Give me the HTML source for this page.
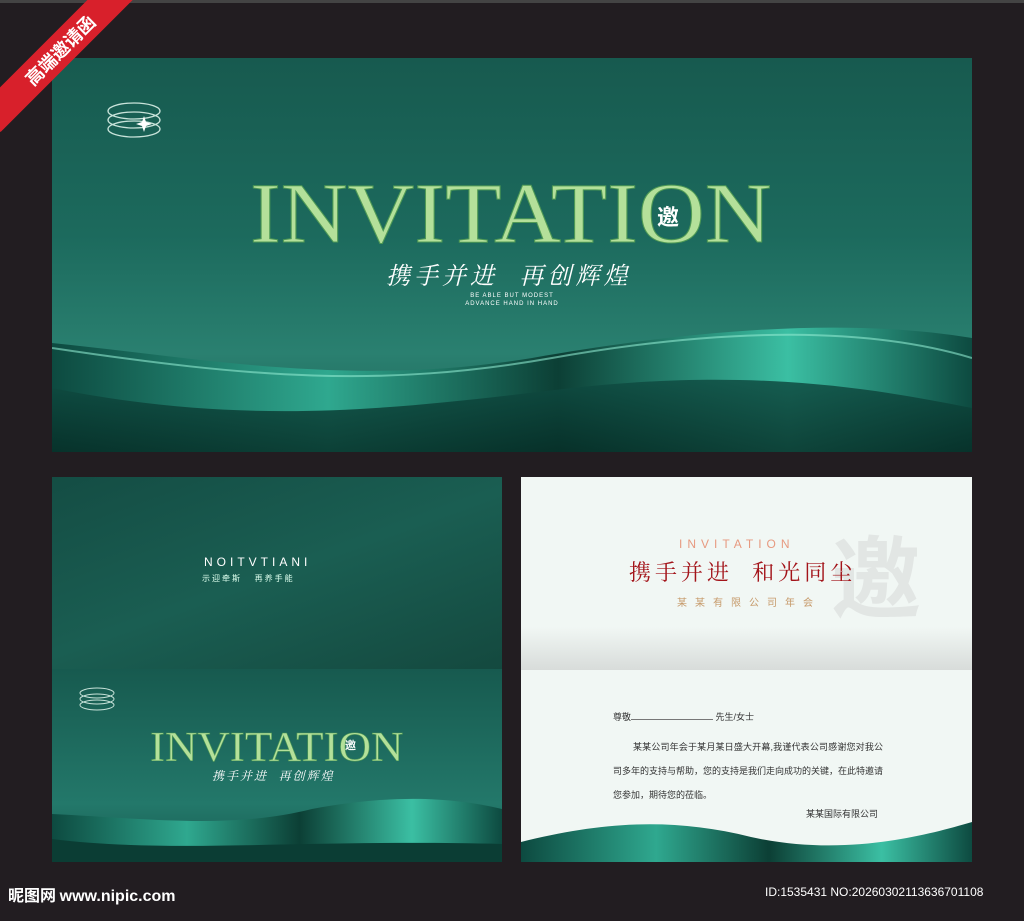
<!DOCTYPE html>
<html><head><meta charset="utf-8"><style>
*{margin:0;padding:0;box-sizing:border-box}
body{width:1024px;height:921px;background:#221d21;position:relative;overflow:hidden;font-family:"Liberation Sans","Noto Sans CJK SC",sans-serif}
.p{position:absolute;overflow:hidden}
.ab{position:absolute}
.inv{position:absolute;font-family:"Liberation Serif",serif;color:#b4e09a;white-space:nowrap;line-height:1;-webkit-text-stroke:1px #4f9a55;transform-origin:left top}
.cal{font-family:"Liberation Sans","Noto Serif CJK SC",sans-serif;color:#fff;white-space:nowrap;position:absolute}
</style></head><body>
<div class="ab" style="left:0;top:0;width:1024px;height:3px;background:#444"></div>
<!-- top panel -->
<div class="p" style="left:52px;top:58px;width:920px;height:394px;background:linear-gradient(180deg,#175a4f 0%,#1c6a5d 45%,#2a8070 75%,#1b5e52 100%)">
<svg class="ab" style="left:0;top:0" width="920" height="394">
<defs><linearGradient id="g1" x1="0" y1="0" x2="1" y2="0"><stop offset="0" stop-color="#0d4a40"/><stop offset=".3" stop-color="#2fa88f"/><stop offset=".55" stop-color="#0c3f35"/><stop offset=".8" stop-color="#3bbfa3"/><stop offset="1" stop-color="#0d4a40"/></linearGradient>
<linearGradient id="g2" x1="0" y1="0" x2="0" y2="1"><stop offset="0" stop-color="#0f4c42"/><stop offset="1" stop-color="#062e27"/></linearGradient></defs>
<path d="M0 285 C150 300 300 330 480 300 C650 270 800 260 920 280 L920 394 L0 394Z" fill="url(#g1)"/>
<path d="M0 330 C200 370 350 350 520 330 C700 310 820 330 920 350 L920 394 L0 394Z" fill="url(#g2)" opacity=".85"/>
<path d="M0 290 C200 320 330 330 500 300 C680 268 820 270 920 300" stroke="#8ee8cf" stroke-width="2" fill="none" opacity=".6"/>
<g fill="none" stroke="#c8e3da" stroke-width="1.3"><ellipse cx="82" cy="53" rx="26" ry="8"/><ellipse cx="82" cy="62" rx="26" ry="8"/><ellipse cx="82" cy="71" rx="26" ry="8"/></g>
<path d="M92 58 l2 6 6 2 -6 2 -2 6 -2 -6 -6 -2 6 -2z" fill="#fff"/>
</svg>
<div class="inv" style="left:198px;top:112px;font-size:86px;transform:scaleX(1.075)">INVITATION</div>
<div class="ab" style="left:605px;top:142px;font-size:22px;color:#fff;font-weight:bold;font-family:'Noto Sans CJK SC',sans-serif">邀</div>
<div class="cal" style="left:334px;top:198px;font-size:24px;font-style:italic;letter-spacing:4px">携手并进&nbsp;&nbsp;再创辉煌</div>
<div class="ab" style="left:400px;top:234px;font-size:6px;color:#fff;text-align:center;width:120px;line-height:8px;letter-spacing:1px">BE ABLE BUT MODEST<br>ADVANCE HAND IN HAND</div>
</div>
<!-- bottom left -->
<div class="p" style="left:52px;top:477px;width:450px;height:192px;background:linear-gradient(160deg,#144d44,#1a5e52 50%,#14493f)">
<div class="ab" style="left:152px;top:78px;color:#fff;font-size:12px;letter-spacing:4px">NOITVTIANI</div>
<div class="ab" style="left:150px;top:96px;color:#dfe;font-size:8px;letter-spacing:2px">示迎牵斯&nbsp;&nbsp;&nbsp;再养手能</div>
</div>
<div class="p" style="left:52px;top:669px;width:450px;height:193px;background:linear-gradient(180deg,#175a4f,#23786a 70%,#175a4f)">
<svg class="ab" style="left:0;top:0" width="450" height="193">
<path d="M0 145 C100 150 180 160 260 140 C340 125 400 128 450 140 L450 193 L0 193Z" fill="url(#g1)"/>
<path d="M0 170 C120 185 250 170 450 175 L450 193 L0 193Z" fill="#0b3d34"/>
<g fill="none" stroke="#c8e3da" stroke-width="1"><ellipse cx="45" cy="24" rx="17" ry="5"/><ellipse cx="45" cy="30" rx="17" ry="5"/><ellipse cx="45" cy="36" rx="17" ry="5"/></g>
</svg>
<div class="inv" style="left:98px;top:58px;font-size:42px;-webkit-text-stroke:.6px #4f9a55;transform:scaleX(1.07)">INVITATION</div>
<div class="ab" style="left:293px;top:68px;font-size:11px;color:#fff;font-weight:bold;font-family:'Noto Sans CJK SC',sans-serif">邀</div>
<div class="cal" style="left:160px;top:98px;font-size:12px;font-style:italic;letter-spacing:2px">携手并进&nbsp;&nbsp;再创辉煌</div>
</div>
<!-- right -->
<div class="p" style="left:521px;top:477px;width:451px;height:385px;background:#f1f7f4">
<div class="ab" style="left:0;top:150px;width:451px;height:43px;background:linear-gradient(180deg,#f1f7f4,#d8dcda)"></div>
<div class="ab" style="left:310px;top:30px;font-size:90px;color:#e2e6e4;font-family:'Noto Sans CJK SC',sans-serif;font-weight:bold">邀</div>
<div class="ab" style="left:158px;top:60px;font-size:12px;color:#e79a80;letter-spacing:5px">INVITATION</div>
<div class="ab" style="left:108px;top:79px;font-size:22px;color:#a3141a;letter-spacing:4px;font-family:'Noto Serif CJK SC',serif">携手并进&nbsp;&nbsp;和光同尘</div>
<div class="ab" style="left:156px;top:117px;font-size:10px;color:#c69a6a;letter-spacing:8px">某某有限公司年会</div>
<div class="ab" style="left:92px;top:233px;font-size:9px;color:#333">尊敬<span style="display:inline-block;width:82px;border-bottom:1px solid #777"></span> 先生/女士</div>
<div class="ab" style="left:92px;top:258px;width:270px;font-size:9px;color:#333;line-height:24px;text-indent:20px;text-align:justify">某某公司年会于某月某日盛大开幕,我谨代表公司感谢您对我公司多年的支持与帮助，您的支持是我们走向成功的关键，在此特邀请您参加，期待您的莅临。</div>
<div class="ab" style="left:285px;top:330px;font-size:9px;color:#333">某某国际有限公司</div>
<svg class="ab" style="left:0;top:0" width="451" height="385"><path d="M0 365 C80 345 150 340 230 360 C320 380 400 360 451 345 L451 385 L0 385Z" fill="url(#g1)"/></svg>
</div>
<!-- ribbon -->
<div class="ab" style="left:-40px;top:34px;width:200px;height:32px;background:#d8202b;transform:rotate(-45deg);color:#fff;font-size:18px;font-weight:bold;text-align:center;line-height:32px;font-family:'Noto Sans CJK SC',sans-serif">高端邀请函</div>
<div class="ab" style="left:8px;top:882px;color:#fff;font-size:16px;font-weight:bold;font-family:'Noto Sans CJK SC',sans-serif">昵图网 <span style="font-family:'Liberation Sans'">www.nipic.com</span></div>
<div class="ab" style="left:765px;top:885px;color:#fff;font-size:12px">ID:1535431 NO:20260302113636701108</div>
</body></html>
